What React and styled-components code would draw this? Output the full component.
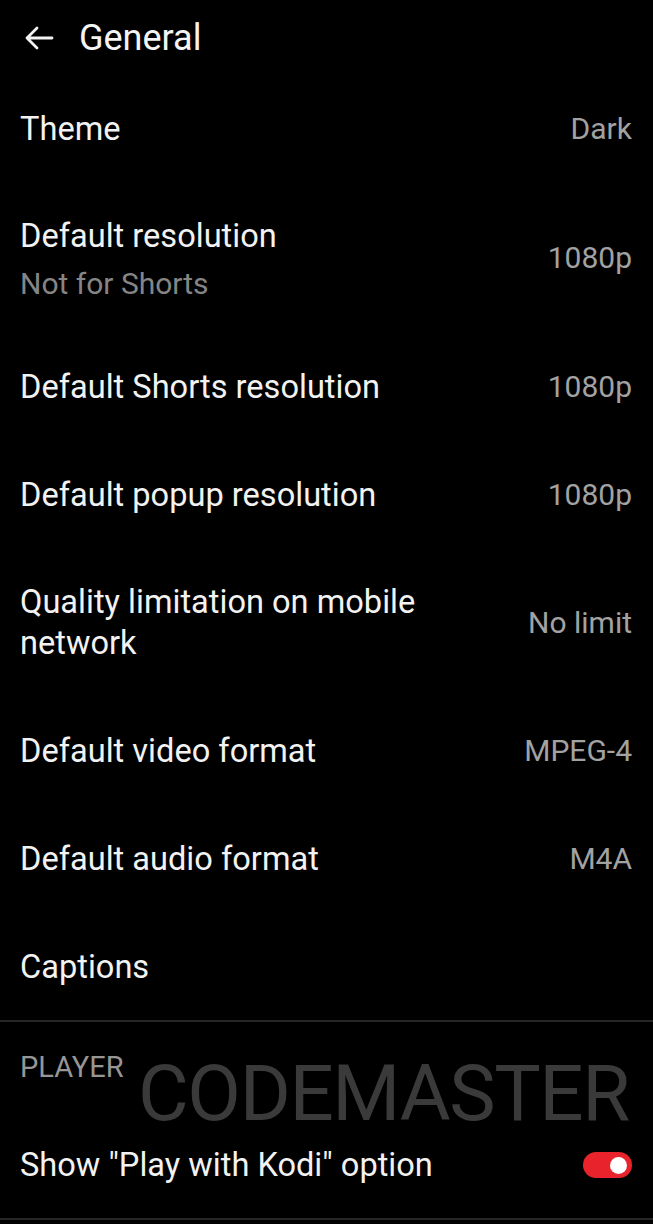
import React from "react";
import styled, { createGlobalStyle } from "styled-components";

const GlobalStyle = createGlobalStyle`
  html, body {
    margin: 0;
    padding: 0;
    background: #000;
  }
  body {
    font-family: Roboto, "Noto Sans", "Liberation Sans", sans-serif;
    -webkit-font-smoothing: antialiased;
  }
`;

const Page = styled.div`
  width: 653px;
  min-height: 1224px;
  background: #000;
  color: #f2f2f2;
  overflow: hidden;
`;

const Header = styled.div`
  display: flex;
  align-items: center;
  height: 74px;
  padding: 2px 0 0 24px;
  box-sizing: border-box;
  gap: 25px;
`;

const BackButton = styled.button`
  display: flex;
  align-items: center;
  justify-content: center;
  width: 30px;
  height: 30px;
  padding: 0;
  border: none;
  background: none;
  color: #f2f2f2;
  cursor: pointer;
`;

const HeaderTitle = styled.h1`
  margin: 0;
  font-size: 36px;
  font-weight: 400;
  line-height: 40px;
  color: #f4f4f4;
`;

const Row = styled.div`
  display: flex;
  align-items: center;
  justify-content: space-between;
  min-height: 108px;
  box-sizing: border-box;
  padding: 34px 21px 32px 20px;
`;

const TextBlock = styled.div`
  display: flex;
  flex-direction: column;
  max-width: 420px;
`;

const Title = styled.div`
  font-size: 32.6px;
  font-weight: 400;
  line-height: 41px;
  color: #f2f2f2;
`;

const Subtitle = styled.div`
  margin-top: 11px;
  font-size: 30px;
  font-weight: 400;
  line-height: 32px;
  color: #858585;
`;

const Value = styled.div`
  font-size: 30px;
  font-weight: 400;
  line-height: 36px;
  color: #a2a2a2;
  white-space: nowrap;
`;

const Divider = styled.div`
  height: 2px;
  background: #262626;
`;

const Section = styled.div`
  position: relative;
`;

const SectionTitle = styled.div`
  padding: 28px 20px 26px;
  font-size: 29px;
  font-weight: 400;
  line-height: 34px;
  color: #969696;
`;

const Watermark = styled.div`
  position: absolute;
  top: 33px;
  left: 138px;
  font-size: 78px;
  font-weight: 400;
  line-height: 78px;
  letter-spacing: -1.4px;
  color: #3a3a3a;
  pointer-events: none;
`;

const Toggle = styled.div`
  position: relative;
  width: 49px;
  height: 26px;
  border-radius: 13px;
  background: ${props => (props.on ? "#e8232b" : "#555")};
  flex-shrink: 0;
`;

const Knob = styled.div`
  position: absolute;
  top: 4.5px;
  ${props => (props.on ? "right: 5.5px;" : "left: 5.5px;")}
  width: 17px;
  height: 17px;
  border-radius: 50%;
  background: #fff;
`;

const settings = [
  { title: "Theme", value: "Dark" },
  { title: "Default resolution", subtitle: "Not for Shorts", value: "1080p" },
  { title: "Default Shorts resolution", value: "1080p" },
  { title: "Default popup resolution", value: "1080p" },
  { title: "Quality limitation on mobile network", value: "No limit" },
  { title: "Default video format", value: "MPEG-4" },
  { title: "Default audio format", value: "M4A" },
  { title: "Captions" },
];

const ArrowLeft = () => (
  <svg width="30" height="26" viewBox="0 0 30 26" fill="none">
    <path
      d="M28 13H3M13 3L3 13l10 10"
      stroke="currentColor"
      strokeWidth="2.8"
      strokeLinecap="round"
      strokeLinejoin="round"
    />
  </svg>
);

const App = () => {
  return (
    <Page>
      <GlobalStyle />
      <Header>
        <BackButton aria-label="Back">
          <ArrowLeft />
        </BackButton>
        <HeaderTitle>General</HeaderTitle>
      </Header>

      {settings.map(item => (
        <Row key={item.title}>
          <TextBlock>
            <Title>{item.title}</Title>
            {item.subtitle && <Subtitle>{item.subtitle}</Subtitle>}
          </TextBlock>
          {item.value && <Value>{item.value}</Value>}
        </Row>
      ))}

      <Divider />

      <Section>
        <Watermark>CODEMASTER</Watermark>
        <SectionTitle>PLAYER</SectionTitle>
        <Row>
          <TextBlock>
            <Title>Show "Play with Kodi" option</Title>
          </TextBlock>
          <Toggle on>
            <Knob on />
          </Toggle>
        </Row>
      </Section>

      <Divider />
    </Page>
  );
};

export default App;
